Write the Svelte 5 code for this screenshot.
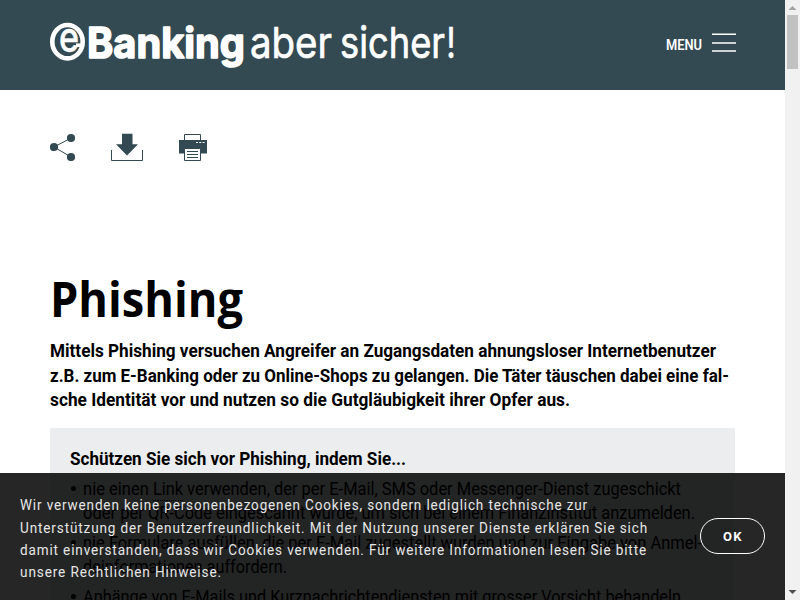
<script>
  const lead = [
    ['Mittels Phishing versuchen Angreifer an Zugangsdaten ahnungsloser Internetbenutzer', 666],
    ['z.B. zum E-Banking oder zu Online-Shops zu gelangen. Die Täter täuschen dabei eine fal-', 679],
    ['sche Identität vor und nutzen so die Gutgläubigkeit ihrer Opfer aus.', 520]
  ];
  const tips = [
    [
      [{ t: 'nie einen ', w: 70 }, { t: 'Link', w: 30, link: true }, { t: ' verwenden, der per E-Mail, SMS oder Messenger-Dienst zugeschickt', w: 498 }],
      [{ t: 'oder per ', w: 65 }, { t: 'QR-Code', w: 64, link: true }, { t: ' eingescannt wurde, um sich bei einem Finanzinstitut anzumelden.', w: 483 }]
    ],
    [
      [{ t: 'nie Formulare ausfüllen, die per E-Mail zugestellt wurden und zur Eingabe von Anmel-', w: 619 }],
      [{ t: 'deinformationen auffordern.', w: 204 }]
    ],
    [[{ t: 'Anhänge von E-Mails und Kurznachrichtendiensten mit grosser Vorsicht behandeln', w: 598 }]]
  ];
  const cookies = [
    ['Wir verwenden keine personenbezogenen Cookies, sondern lediglich technische zur', 568],
    ['Unterstützung der Benutzerfreundlichkeit. Mit der Nutzung unserer Dienste erklären Sie sich', 628],
    ['damit einverstanden, dass wir Cookies verwenden. Für weitere Informationen lesen Sie bitte', 627],
    ['unsere Rechtlichen Hinweise.', 202]
  ];

  // Condenses a run of text to the given width.
  function fit(node, width) {
    const natural = node.getBoundingClientRect().width;
    node.style.transform = `scaleX(${width / natural})`;
    node.style.marginRight = `${width - natural}px`;
  }
</script>

<div class="window">
  <div class="page">
    <header>
      <svg class="logo" width="420" height="70" viewBox="50 8 420 70" role="img" aria-label="eBanking aber sicher!">
        <ellipse cx="67.5" cy="41.7" rx="15.2" ry="16.7" fill="none" stroke="#fff" stroke-width="4.6" />
        <path d="M76 45.2H83" stroke="#fff" stroke-width="3.6" />
        <g fill="#fff" stroke="#fff" stroke-linejoin="round">
          <text x="59" y="52" font-size="41" stroke-width=".5" font-weight="500" textLength="20" lengthAdjust="spacingAndGlyphs">e</text>
          <text x="87" y="57.6" font-size="42" stroke-width="1.6" font-weight="700" textLength="158" lengthAdjust="spacingAndGlyphs">Banking</text>
          <text x="250" y="57.8" font-size="43" stroke-width=".7" font-weight="400" textLength="82" lengthAdjust="spacingAndGlyphs">aber</text>
          <text x="340" y="57.8" font-size="43" stroke-width=".7" font-weight="400" textLength="105" lengthAdjust="spacingAndGlyphs">sicher</text>
          <text x="446" y="57.8" font-size="43" stroke-width=".4" font-weight="400" textLength="10" lengthAdjust="spacingAndGlyphs">!</text>
        </g>
      </svg>
      <div class="menu">
        <span class="menu-label"><span class="run" use:fit={36}>MENU</span></span>
        <svg width="24" height="20" viewBox="0 0 24 20" stroke="#fff" stroke-width="1.5">
          <path d="M0 1.2H24M0 10H24M0 18H24" />
        </svg>
      </div>
    </header>

    <main>
      <div class="tools">
        <svg width="26" height="28" viewBox="0 0 26 28">
          <path d="M21 5L4 14L21 24" fill="none" stroke="#334a52" />
          <g fill="#334a52"><circle cx="4" cy="14" r="4.1" /><circle cx="21" cy="5" r="4.1" /><circle cx="21" cy="24" r="4.1" /></g>
        </svg>
        <svg width="32" height="28" viewBox="0 0 32 28">
          <path d="M.5 17V27.5H31.5V17" fill="none" stroke="#334a52" />
          <path d="M11 .8H21.5V11.2H27L16 22.4L5 11.2H11Z" fill="#334a52" />
        </svg>
        <svg class="print" width="28" height="28" viewBox="0 0 28 28">
          <path d="M5.5 8V1.5H21.5V8" fill="#fff" stroke="#334a52" />
          <path d="M0 7H28V20.5H0Z" fill="#334a52" />
          <path d="M17 9.5H26" stroke="#fff" stroke-dasharray="2 1.3" />
          <path d="M5.5 15.5H21.5V27.5H5.5Z" fill="#fff" stroke="#334a52" />
          <path d="M8 18.5H19M8 21.5H19M8 24.5H19" stroke="#334a52" />
        </svg>
      </div>

      <h1><span class="run" use:fit={193}>Phishing</span></h1>
      <p class="lead">
        {#each lead as [text, width]}
          <span class="line"><span class="run" use:fit={width}>{text}</span></span>
        {/each}
      </p>

      <section>
        <h2><span class="run" use:fit={336}>Schützen Sie sich vor Phishing, indem Sie...</span></h2>
        <ul>
          {#each tips as lines}
            <li>
              {#each lines as runs}
                <span class="line">{#each runs as r}<span class="run" class:link={r.link} use:fit={r.w}>{r.t}</span>{/each}</span>
              {/each}
            </li>
          {/each}
        </ul>
      </section>
    </main>

    <aside>
      <p>
        {#each cookies as [text, width]}
          <span class="line"><span class="run" use:fit={width}>{text}</span></span>
        {/each}
      </p>
      <button>OK</button>
    </aside>
  </div>

  <div class="scrollbar">
    <svg width="15" height="14" viewBox="0 0 15 14"><path d="M3.5 10L7.5 6L11.5 10Z" fill="#a3a3a3" /></svg>
    <div class="thumb"></div>
    <svg width="15" height="14" viewBox="0 0 15 14"><path d="M3.5 4L7.5 8L11.5 4Z" fill="#505050" /></svg>
  </div>
</div>

<style>
  .window {
    display: flex;
    width: 800px;
    height: 600px;
    overflow: hidden;
    font-family: Roboto, "Liberation Sans", sans-serif;
    color: #000;
    background: #fff;
  }
  .page {
    position: relative;
    width: 785px;
    height: 600px;
    overflow: hidden;
  }
  header {
    box-sizing: border-box;
    height: 90px;
    display: flex;
    justify-content: space-between;
    align-items: flex-start;
    padding: 8px 49px 0 50px;
    background: #334a52;
    color: #fff;
  }
  .logo {
    font-family: Inter, Roboto, sans-serif;
  }
  .menu {
    display: flex;
    gap: 10px;
    padding-top: 25px;
  }
  .menu svg {
    display: block;
  }
  .menu-label {
    font-size: 14px;
    font-weight: 600;
    line-height: 24px;
  }
  main {
    padding: 43px 50px 0;
  }
  .tools {
    display: flex;
    gap: 35px;
    height: 28px;
  }
  .print {
    margin-left: 1px;
  }
  .run {
    display: inline-block;
    white-space: pre;
    transform-origin: 0 50%;
  }
  .line {
    display: block;
    white-space: nowrap;
  }
  h1 {
    margin: 105px 0 0;
    font: 700 49px/64px "Open Sans", Roboto, sans-serif;
  }
  .lead {
    margin: 9.3px 0 0;
    font-size: 18px;
    font-weight: 700;
    line-height: 24.4px;
  }
  section {
    box-sizing: border-box;
    width: 685px;
    margin-top: 15.5px;
    padding: 19px 20px;
    background: #ebedef;
  }
  h2 {
    margin: 0;
    font-size: 18px;
    font-weight: 700;
    line-height: 24px;
  }
  ul {
    margin: 6px 0 0;
    padding: 0;
    list-style: none;
    font-size: 18px;
    line-height: 24px;
  }
  li {
    position: relative;
    margin-bottom: 6px;
    padding-left: 13px;
  }
  .line:has(.link) {
    height: 24px;
  }
  li::before {
    content: "";
    position: absolute;
    left: 1px;
    top: 9px;
    width: 5px;
    height: 5px;
    border-radius: 50%;
    background: #000;
  }
  .link {
    background: repeating-linear-gradient(90deg, #000 0 1px, transparent 1px 2px) 0 100% / 100% 1px no-repeat;
  }
  aside {
    position: absolute;
    inset: 473px 0 0;
    box-sizing: border-box;
    display: flex;
    justify-content: space-between;
    align-items: flex-start;
    padding: 0 20px;
    background: rgba(0, 0, 0, 0.85);
    color: #e6e6e6;
  }
  aside p {
    margin: 21.2px 0 0;
    font-size: 15.5px;
    line-height: 22.4px;
    letter-spacing: 1px;
  }
  button {
    width: 65px;
    height: 36px;
    margin-top: 45px;
    padding: 0 0 0 1px;
    border: 1px solid #fff;
    border-radius: 18px;
    background: transparent;
    color: #fff;
    font: 700 13px Roboto, sans-serif;
    letter-spacing: 1.4px;
  }
  .scrollbar {
    width: 15px;
    height: 600px;
    display: flex;
    flex-direction: column;
    background: #f1f1f1;
  }
  .scrollbar svg {
    display: block;
  }
  .thumb {
    width: 11px;
    height: 54px;
    margin: 1px 2px auto;
    background: #c1c1c1;
  }
</style>
